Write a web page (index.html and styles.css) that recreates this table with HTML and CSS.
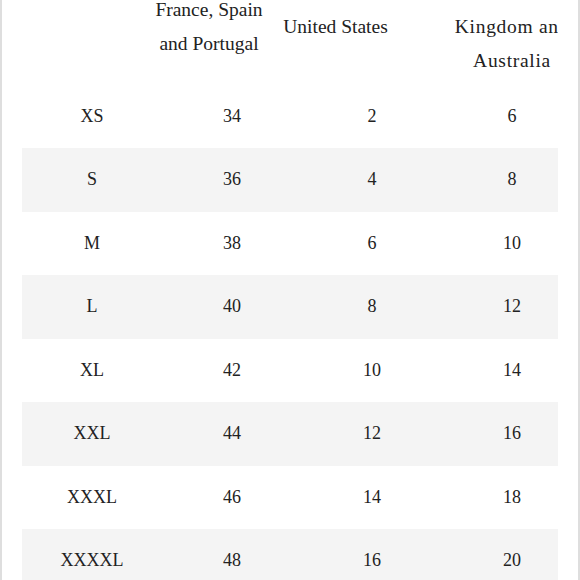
FILE: index.html
```html
<!DOCTYPE html>
<html>
<head>
<meta charset="utf-8">
<link rel="stylesheet" href="styles.css">
</head>
<body>
<div class="frame">
  <div class="clip">
    <div class="sheet">
      <div class="head">
        <div class="hcell"></div>
        <div class="hcell">France, Spain<br>and Portugal</div>
        <div class="hcell">United States</div>
        <div class="hcell wide">United<br>Kingdom and<br>Australia</div>
      </div>
      <div class="row"><div class="cell">XS</div><div class="cell">34</div><div class="cell">2</div><div class="cell">6</div></div>
      <div class="row alt"><div class="cell">S</div><div class="cell">36</div><div class="cell">4</div><div class="cell">8</div></div>
      <div class="row"><div class="cell">M</div><div class="cell">38</div><div class="cell">6</div><div class="cell">10</div></div>
      <div class="row alt"><div class="cell">L</div><div class="cell">40</div><div class="cell">8</div><div class="cell">12</div></div>
      <div class="row"><div class="cell">XL</div><div class="cell">42</div><div class="cell">10</div><div class="cell">14</div></div>
      <div class="row alt"><div class="cell">XXL</div><div class="cell">44</div><div class="cell">12</div><div class="cell">16</div></div>
      <div class="row"><div class="cell">XXXL</div><div class="cell">46</div><div class="cell">14</div><div class="cell">18</div></div>
      <div class="row alt"><div class="cell">XXXXL</div><div class="cell">48</div><div class="cell">16</div><div class="cell">20</div></div>
    </div>
  </div>
</div>
</body>
</html>
```
FILE: styles.css
```css
html, body {
  margin: 0;
  padding: 0;
  background: #ffffff;
}
.frame {
  width: 580px;
  height: 580px;
  box-sizing: border-box;
  border-left: 2px solid #dedede;
  border-right: 2px solid #dedede;
  overflow: hidden;
  padding-left: 20px;
}
.clip {
  width: 536px;
  overflow: hidden;
}
.sheet {
  width: 600px;
  margin-top: -31px;
  font-family: "Liberation Serif", "Times New Roman", serif;
  color: #222222;
}
.head {
  display: grid;
  grid-template-columns: 127px 120px 133px 220px;
  align-items: center;
  padding: 7px 0 6.5px;
  font-size: 19.5px;
  line-height: 34px;
}
.hcell {
  text-align: center;
}
.hcell.wide {
  letter-spacing: 0.7px;
}
.row {
  display: grid;
  grid-template-columns: 140px 140px 140px 140px;
  height: 63.5px;
  align-items: center;
  font-size: 18px;
  width: 560px;
}
.row.alt {
  background: #f4f4f4;
}
.cell {
  text-align: center;
}
```
